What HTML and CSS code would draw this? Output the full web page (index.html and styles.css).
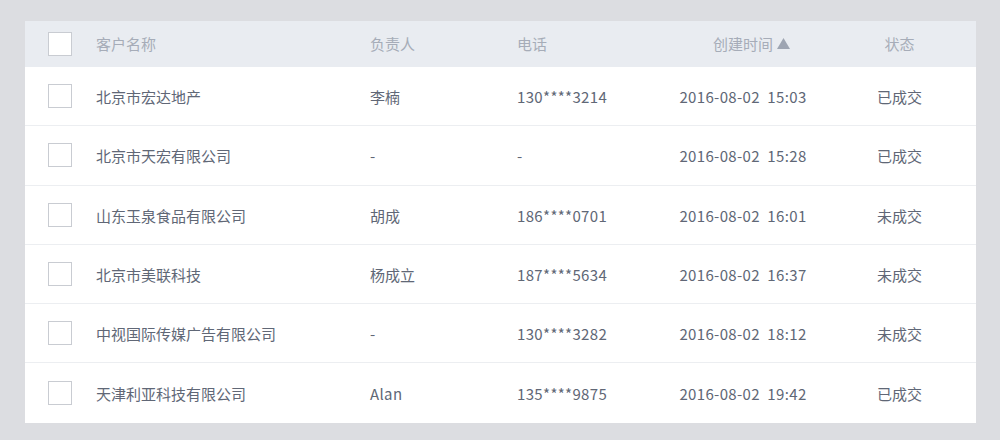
FILE: index.html
```html
<!DOCTYPE html>
<html lang="zh-CN">
<head>
<meta charset="utf-8">
<title>客户列表</title>
<link rel="stylesheet" href="styles.css">
</head>
<body>
<div class="page">
  <div class="table">
    <div class="row head">
      <div class="cell check"><span class="box"></span></div>
      <div class="cell">客户名称</div>
      <div class="cell">负责人</div>
      <div class="cell">电话</div>
      <div class="cell center"><span class="sort">创建时间<svg class="arrow" width="13" height="11" viewBox="0 0 13 11"><polygon points="6.5,0 13,11 0,11" fill="#9ea5b2"/></svg></span></div>
      <div class="cell center">状态</div>
    </div>
    <div class="row">
      <div class="cell check"><span class="box"></span></div>
      <div class="cell">北京市宏达地产</div>
      <div class="cell">李楠</div>
      <div class="cell num">130****3214</div>
      <div class="cell center num">2016-08-02&nbsp; 15:03</div>
      <div class="cell center">已成交</div>
    </div>
    <div class="row">
      <div class="cell check"><span class="box"></span></div>
      <div class="cell">北京市天宏有限公司</div>
      <div class="cell">-</div>
      <div class="cell">-</div>
      <div class="cell center num">2016-08-02&nbsp; 15:28</div>
      <div class="cell center">已成交</div>
    </div>
    <div class="row">
      <div class="cell check"><span class="box"></span></div>
      <div class="cell">山东玉泉食品有限公司</div>
      <div class="cell">胡成</div>
      <div class="cell num">186****0701</div>
      <div class="cell center num">2016-08-02&nbsp; 16:01</div>
      <div class="cell center">未成交</div>
    </div>
    <div class="row">
      <div class="cell check"><span class="box"></span></div>
      <div class="cell">北京市美联科技</div>
      <div class="cell">杨成立</div>
      <div class="cell num">187****5634</div>
      <div class="cell center num">2016-08-02&nbsp; 16:37</div>
      <div class="cell center">未成交</div>
    </div>
    <div class="row">
      <div class="cell check"><span class="box"></span></div>
      <div class="cell">中视国际传媒广告有限公司</div>
      <div class="cell">-</div>
      <div class="cell num">130****3282</div>
      <div class="cell center num">2016-08-02&nbsp; 18:12</div>
      <div class="cell center">未成交</div>
    </div>
    <div class="row">
      <div class="cell check"><span class="box"></span></div>
      <div class="cell">天津利亚科技有限公司</div>
      <div class="cell num">Alan</div>
      <div class="cell num">135****9875</div>
      <div class="cell center num">2016-08-02&nbsp; 19:42</div>
      <div class="cell center">已成交</div>
    </div>
  </div>
</div>
</body>
</html>
```
FILE: styles.css
```css
html, body {
  margin: 0;
  padding: 0;
  background: #dcdde1;
}
body {
  font-family: "Noto Sans CJK SC", "Noto Sans", sans-serif;
  font-size: 15px;
  color: #606776;
}
.page {
  padding: 21px 24px 0 25px;
}
.table {
  background: #ffffff;
  width: 951px;
}
.row {
  display: grid;
  grid-template-columns: 71px 274px 147px 146px 160px 1fr;
  height: 58.3px;
  align-items: center;
  border-bottom: 1px solid #eceef1;
  box-sizing: content-box;
}
.row:last-child {
  border-bottom: none;
  height: 59.5px;
}
.row.head {
  height: 46px;
  background: #e9ecf1;
  color: #a6acb8;
  border-bottom: none;
}
.cell {
  white-space: nowrap;
  line-height: 20px;
  padding-top: 2px;
}
.head .cell {
  padding-top: 0;
}
.num {
  letter-spacing: 0.35px;
}
.center {
  text-align: center;
}
.check {
  padding-left: 23px;
  display: flex;
  align-items: center;
}
.row .check {
  padding-top: 0;
}
.box {
  display: block;
  width: 22px;
  height: 22px;
  border: 1px solid #c9ccd2;
  background: #ffffff;
}
.sort {
  position: relative;
  display: inline-block;
}
.arrow {
  position: absolute;
  left: calc(100% + 4px);
  top: 4px;
}
```
